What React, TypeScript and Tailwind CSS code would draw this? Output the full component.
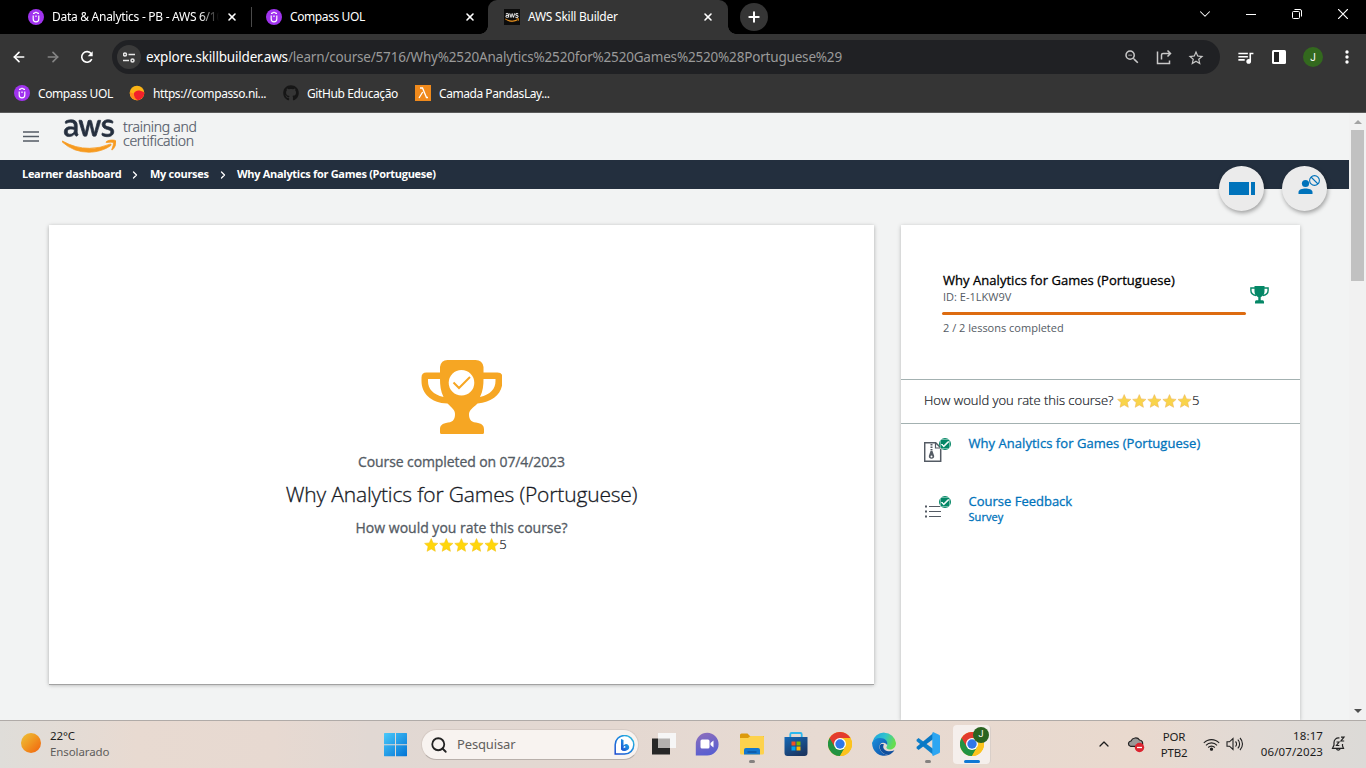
import React from "react";
import { MdQueueMusic, MdStarBorder, MdZoomOut, MdCheck } from "react-icons/md";
import { FaAws, FaGithub } from "react-icons/fa";
import { ArrowLeft, ArrowRight, X, Plus, ChevronUp, ChevronDown, ChevronRight, Search } from "lucide-react";

function Udot() {
  return (
    <svg className="h-4 w-4 shrink-0" viewBox="0 0 16 16">
      <circle cx="8" cy="8" r="8" fill="#a033ee" />
      <path d="M5.200 6.500v3.500a2.800 2.800 0 0 0 5.600 0V6.500M5 4.300h1.500M9.500 4.300H11M6.500 4.300a1.600 1.600 0 0 1 3 0M8 6.500v1.500" fill="none" stroke="#fff" strokeWidth="1.200" />
    </svg>
  );
}

function AwsLogo({ className, letters, id }: { className: string; letters: string; id: string }) {
  return (
    <>
      <svg width="0" height="0" className="absolute">
        <linearGradient id={id} x1="0" y1="0" x2="0" y2="1">
          <stop offset="0.58" stopColor={letters} />
          <stop offset="0.58" stopColor="#f79a1f" />
        </linearGradient>
      </svg>
      <FaAws className={className} fill={`url(#${id})`} stroke={`url(#${id})`} strokeWidth={9} />
    </>
  );
}

function Stars({ color, edge }: { color: string; edge: string }) {
  return (
    <svg className="h-[14px] w-[75px] shrink-0" viewBox="0 0 75 14">
      {[0, 1, 2, 3, 4].map((i) => (
        <path
          key={i}
          transform={`translate(${i * 15.1} 0)`}
          d="M7.200 .6l1.900 4.300 4.700.5-3.500 3.200 1 4.700-4.100-2.400-4.100 2.400 1-4.700L.6 5.400l4.700-.5z"
          fill={color}
          stroke={edge}
          strokeWidth="0.600"
        />
      ))}
    </svg>
  );
}

function Done() {
  return (
    <span className="absolute left-[15px] top-[-3px] flex h-3 w-3 items-center justify-center rounded-full bg-[#048766]">
      <MdCheck className="h-[10px] w-[10px] stroke-white stroke-2 text-white" />
    </span>
  );
}

function Chrome() {
  return (
    <svg className="h-6 w-6" viewBox="0 0 24 24">
      <circle cx="12" cy="12" r="12" fill="#fbbc05" />
      <path d="M1.600 6a12 12 0 0 0 10.400 18l5.200-9L12 12z" fill="#229342" />
      <path d="M12 6h10.400A12 12 0 0 1 12 24l5.200-9z" fill="#fcc31e" />
      <path d="M1.600 6L6.800 15 12 6h10.400A12 12 0 0 0 1.600 6z" fill="#e33b2e" />
      <circle cx="12" cy="12" r="6" fill="#fff" />
      <circle cx="12" cy="12" r="4.700" fill="#2f77e8" />
    </svg>
  );
}

function Edge() {
  return (
    <svg className="h-6 w-6" viewBox="0 0 24 24">
      <defs>
        <linearGradient id="ea" x1="0" y1="0" x2="1" y2="0.300">
          <stop offset="0" stopColor="#1f9fdf" />
          <stop offset="0.550" stopColor="#2fc3cf" />
          <stop offset="1" stopColor="#66dd4f" />
        </linearGradient>
        <linearGradient id="eb" x1="0" y1="0" x2="1" y2="1">
          <stop offset="0" stopColor="#1b8fdc" />
          <stop offset="1" stopColor="#0c4da6" />
        </linearGradient>
      </defs>
      <path d="M.3 10.500A12 12 0 0 1 24 11c0 4.200-3 6.500-6 6.500-3 0-4.200-1.400-3.400-2.700 1.800-2.800.2-6.600-4.600-6.600-4 0-7.500 1.300-9.700 4.300z" fill="url(#ea)" />
      <path d="M.2 11C1.500 7.400 5 5.800 8.500 6c5 .2 7.700 3.500 6.600 7.300-.5-1.700-2-2.600-3.900-2.600-3 0-4.300 2.700-3.600 5.600.9 3.700 4.500 6.500 8.900 6.700A12 12 0 0 1 .2 11z" fill="url(#eb)" />
      <path d="M7.700 13.500c-.6 4 2.300 8.600 8.800 9.500 2.500-.9 4.700-2.700 5.900-4.800-2.900 1.500-7.500 1.400-9.500-.2-1.700-1.400-2.300-3.300-1-5.700-2-.8-3.700-.2-4.200 1.200z" fill="#0f4f9e" />
    </svg>
  );
}

function VsCode() {
  return (
    <svg className="h-6 w-6" viewBox="0 0 24 24">
      <path d="M.5 7.800l2-1.800L18 17.500v6L.7 9.200z" fill="#0f7fc9" />
      <path d="M.5 16.200l2 1.800L18 6.500v-6L.7 14.800z" fill="#0a78c4" />
      <path d="M17.500.2L23 2.800a1.500 1.500 0 0 1 1 1.400v15.600a1.500 1.500 0 0 1-1 1.400l-5.500 2.600c-.7.200-1.200-.2-1.200-.9V1.100c0-.7.6-1.100 1.200-.9z" fill="#2da6f2" />
    </svg>
  );
}

function Folder() {
  return (
    <svg className="h-6 w-6" viewBox="0 0 24 24">
      <path d="M0 3a1.500 1.500 0 0 1 1.500-1.500h6L10 4H24v3H0z" fill="#dc9a0c" />
      <path d="M0 6h8l2.500-2H23a1 1 0 0 1 1 1V21a1.500 1.500 0 0 1-1.500 1.500h-21A1.500 1.500 0 0 1 0 21z" fill="#fdd24d" />
      <path d="M4 22.500V18a2 2 0 0 1 2-2h12a2 2 0 0 1 2 2v4.500z" fill="#1377ce" />
      <path d="M7.500 20h9" stroke="#0c55a0" strokeWidth="1.500" />
    </svg>
  );
}

function Store() {
  return (
    <svg className="h-6 w-6" viewBox="0 0 24 24">
      <defs>
        <linearGradient id="st" x1="0" y1="0" x2="0.600" y2="1">
          <stop offset="0" stopColor="#1469b8" />
          <stop offset="1" stopColor="#1b3763" />
        </linearGradient>
      </defs>
      <path d="M6.300 6V2.300a1.300 1.300 0 0 1 1.300-1.300h8.800a1.300 1.300 0 0 1 1.300 1.300V6" fill="none" stroke="#2db8ee" strokeWidth="1.800" />
      <path d="M.5 5h23v16a3 3 0 0 1-3 3h-17a3 3 0 0 1-3-3z" fill="url(#st)" />
      <path d="M7.500 9.500h4v4h-4z" fill="#f25022" />
      <path d="M12.500 9.500h4v4h-4z" fill="#7fba00" />
      <path d="M7.500 14.500h4v4h-4z" fill="#00a4ef" />
      <path d="M12.500 14.500h4v4h-4z" fill="#ffb900" />
    </svg>
  );
}

function TabStrip() {
  return (
    <div className="relative flex h-[34px] items-center bg-black text-[12px] text-white">
      <div className="flex w-[251px] items-center pl-7">
        <Udot />
        <span className="ml-2 w-[168px] overflow-hidden whitespace-nowrap tracking-[-0.280px] [mask-image:linear-gradient(to_right,#000_148px,transparent_167px)]">Data &amp; Analytics - PB - AWS 6/10</span>
        <X className="ml-[6px] h-3 w-3" strokeWidth={3.200} />
      </div>
      <div className="h-5 w-px bg-[#4a4a4a]" />
      <div className="flex w-[236px] items-center pl-[14px]">
        <Udot />
        <span className="ml-2 w-[172px] tracking-[-0.400px]">Compass UOL</span>
        <X className="ml-[2px] h-3 w-3" strokeWidth={3.200} />
      </div>
      <div className="relative flex h-[34px] w-[240px] items-center rounded-t-[9px] bg-[#353535] pl-4">
        <span className="absolute -left-2 bottom-0 h-2 w-2 bg-[radial-gradient(circle_at_0_0,#000_7.500px,#353535_8px)]" />
        <span className="absolute -right-2 bottom-0 h-2 w-2 bg-[radial-gradient(circle_at_100%_0,#000_7.500px,#353535_8px)]" />
        <span className="flex h-4 w-4 items-center justify-center bg-[#0c0c0c]">
          <AwsLogo id="aws-tab" className="h-[13px] w-[14px]" letters="#ffffff" />
        </span>
        <span className="ml-2 w-[174px] tracking-[-0.250px]">AWS Skill Builder</span>
        <X className="h-3 w-3" strokeWidth={3.200} />
      </div>
      <div className="ml-3 mt-[-1px] flex h-7 w-7 items-center justify-center rounded-full bg-[#353535]">
        <Plus className="h-4 w-4" strokeWidth={3} />
      </div>
      <div className="ml-auto mt-[-6px] flex items-center">
        <ChevronDown className="mr-[32px] h-[18px] w-[18px]" strokeWidth={1.400} />
        <svg className="mr-[36px] h-[10px] w-[10px]" viewBox="0 0 10 10"><path d="M0 5.500h10" stroke="#fff" /></svg>
        <svg className="mr-[36px] h-[10px] w-[10px]" viewBox="0 0 10 10">
          <rect x=".5" y="2.500" width="7" height="7" rx="1" fill="none" stroke="#fff" />
          <path d="M2.500.5H8A1.500 1.500 0 0 1 9.500 2v5.500" fill="none" stroke="#fff" />
        </svg>
        <svg className="mr-[18px] h-[10px] w-[10px]" viewBox="0 0 10 10"><path d="M0 0l10 10M10 0L0 10" stroke="#fff" strokeWidth="1.200" /></svg>
      </div>
    </div>
  );
}

function Toolbar() {
  return (
    <div className="flex h-[40px] items-end bg-[#353535]">
      <div className="flex h-[34px] w-[112px] items-center pl-[11px]">
        <ArrowLeft className="h-4 w-4 text-white" strokeWidth={2.500} />
        <ArrowRight className="ml-[18px] h-4 w-4 text-[#858585]" strokeWidth={2.500} />
        <svg className="ml-[19px] h-[14px] w-[14px]" viewBox="0 0 14 14">
          <path d="M11.800 9.200A5.300 5.300 0 1 1 11.300 3.800" fill="none" stroke="#fff" strokeWidth="1.600" />
          <path d="M12.700 1.200v5H7.700z" fill="#fff" />
        </svg>
      </div>
      <div className="flex h-[34px] w-[1108px] items-center rounded-full bg-[#202124] pl-[5px]">
        <span className="flex h-6 w-6 items-center justify-center rounded-full bg-[#3a3a3a]">
          <svg className="h-[11px] w-3" viewBox="0 0 12 11" fill="none" stroke="#e8e8e8" strokeWidth="1.500">
            <circle cx="2" cy="2.500" r="1.500" />
            <path d="M5.500 2.500H12M0 8.500h6" />
            <circle cx="9.500" cy="8.500" r="1.500" />
          </svg>
        </span>
        <span className="ml-[5px] mt-px whitespace-nowrap text-[13.500px] tracking-[-0.185px] text-[#9a9a9a]"><span className="text-white">explore.skillbuilder.aws</span>/learn/course/5716/Why%2520Analytics%2520for%2520Games%2520%28Portuguese%29</span>
        <div className="ml-auto mr-[15px] flex items-center gap-[14px] text-[#c8c8c8]">
          <MdZoomOut className="h-[18px] w-[18px]" />
          <svg className="h-[18px] w-[18px]" viewBox="0 0 18 18" fill="none" stroke="currentColor" strokeWidth="1.500">
            <path d="M2.500 3.500v12h12v-3M6.500 11.500V7a1.500 1.500 0 0 1 1.500-1.500h7M12.500 2.500l3 3-3 3" />
          </svg>
          <MdStarBorder className="mt-px h-[18px] w-[18px]" />
        </div>
      </div>
      <div className="flex h-[34px] flex-1 items-center pl-[16px] text-white">
        <MdQueueMusic className="h-[19px] w-[19px]" />
        <svg className="ml-[17px] h-[14px] w-[14px]" viewBox="0 0 14 14"><rect width="14" height="14" rx="1.500" fill="#fff" /><rect x="2" y="2" width="5" height="10" fill="#222" /></svg>
        <span className="ml-[17px] flex h-5 w-5 items-center justify-center rounded-full bg-[#33691e] font-[Roboto,sans-serif] text-[10px]">J</span>
        <svg className="ml-[22px] h-[14px] w-1" viewBox="0 0 4 14" fill="#fff"><circle cx="2" cy="2" r="1.700" /><circle cx="2" cy="7" r="1.700" /><circle cx="2" cy="12" r="1.700" /></svg>
      </div>
    </div>
  );
}

function Bookmarks() {
  return (
    <div className="flex h-[39px] items-center border-b border-[#5a5a5a] bg-[#353535] pl-[14px] text-[12px] tracking-[-0.400px] text-white">
      <Udot />
      <span className="ml-2 mt-px w-[75px] whitespace-nowrap">Compass UOL</span>
      <svg className="ml-4 h-4 w-4" viewBox="0 0 16 16">
        <circle cx="8" cy="8" r="7.300" fill="#fbb416" />
        <path d="M1 6.500A7.300 7.300 0 0 0 10 15C6 14 4.500 11 5 8c-1 .5-3 .2-4-1.500z" fill="#ff8a1c" />
        <path d="M5 8c2-3 5-3.500 10.300-.5A7.300 7.300 0 0 1 9 15.200C6 14 4.500 11 5 8z" fill="#f2202b" />
      </svg>
      <span className="ml-2 mt-px w-[114px] whitespace-nowrap">https://compasso.ni...</span>
      <FaGithub className="ml-4 h-4 w-4 text-[#161616]" />
      <span className="ml-2 mt-px w-[92px] whitespace-nowrap tracking-[-0.380px]">GitHub Educação</span>
      <svg className="ml-4 h-4 w-4" viewBox="0 0 16 16">
        <rect width="16" height="16" fill="#f08a1c" />
        <path d="M5 3h2.500l4 9.500H13M7.700 7L4 13" fill="none" stroke="#fff" strokeWidth="1.300" />
      </svg>
      <span className="ml-2 mt-px whitespace-nowrap tracking-[-0.450px]">Camada PandasLay...</span>
    </div>
  );
}

function CourseCard() {
  return (
    <section className="flex h-[459px] w-[825px] shrink-0 flex-col items-center bg-white pt-[135px] text-[#545b64] shadow-[0_1px_0_#a2a2a2,0_1px_4px_rgba(0,0,0,0.3)]">
      <svg className="h-[75px] w-[81px]" viewBox="0.500 0 81 75">
        <path d="M27 0h28q7 0 8 7v5.500h14q5 0 5 5V21c0 12-9 21-25 22.500-5 5-8 6-8.500 10.500 0 4 1 8 7 8.500 6 1 8 3 8 7v3q0 1.500-1.500 1.500h-41Q19.500 74 19.500 72.500v-3c0-4 2-6 8-7 6-.5 7-4.500 7-8.500 0-4-3-6-7.500-10.500C10 43 1 33 1 21v-3.500q0-5 5-5h13.500V7q1-7 7.500-7zM19.500 19h-12v2c0 8 5 13.500 15.500 16-3-6-3.500-12-3.500-18zM63 19c0 6-.5 12-3.500 18C70 34.500 75 29 75 21v-2z" fill="#f6a623" fillRule="evenodd" />
        <circle cx="41" cy="22.700" r="12.800" fill="#fff" />
        <path d="M33 22.500l5.500 5.500L49.500 17" fill="none" stroke="#f6a623" strokeWidth="2" />
      </svg>
      <div className="mt-4 text-[14px] leading-[22px] tracking-[-0.100px] [-webkit-text-stroke:0.300px]">Course completed on 07/4/2023</div>
      <h1 className="mt-[5px] text-[21px] font-light leading-[32px] tracking-[-0.160px] text-[#16191f] [-webkit-text-stroke:0.300px]">Why Analytics for Games (Portuguese)</h1>
      <div className="mt-[8px] text-[14px] leading-[20px] tracking-[0px] [-webkit-text-stroke:0.300px]">How would you rate this course?</div>
      <div className="ml-[8px] mt-[-1px] flex h-[15px] items-center text-[13px] text-[#16191f]">
        <Stars color="#ffd60a" edge="#f5c518" /><span className="font-light [-webkit-text-stroke:0.200px]">5</span>
      </div>
    </section>
  );
}

function SidePanel() {
  return (
    <aside className="h-[495px] w-[399px] shrink-0 bg-white shadow-[0_1px_4px_rgba(0,0,0,0.25)]">
      <div className="flex h-[155px] border-b border-[#a3b1b1] pl-[41px] pt-[46px]">
        <div className="w-[304px] text-[11px] text-[#545b64]">
          <div className="ml-px whitespace-nowrap text-[13px] leading-[18px] tracking-[0.040px] text-black [-webkit-text-stroke:0.300px]">Why Analytics for Games (Portuguese)</div>
          <div className="ml-px leading-[16px]">ID: E-1LKW9V</div>
          <div className="mt-[7px] h-[3px] rounded-full bg-[#dd6b10]" />
          <div className="ml-px mt-[5px] leading-[16px]">2 / 2 lessons completed</div>
        </div>
        <svg className="ml-1 mt-[15px] h-[18px] w-[19px]" viewBox="0 0 19 18">
          <path d="M5 2H.9v2.500C.9 7 3 9 6 9.500M14 2h4.100v2.500C18.100 7 16 9 13 9.500" fill="none" stroke="#048766" strokeWidth="1.400" />
          <path d="M4.500 0h10v5c0 4-2 5-3.800 6.200v3h2q1.300 0 1.300 1.800v1.500H5V16q0-1.800 1.300-1.800h2v-3C6.500 10 4.500 9 4.500 5z" fill="#048766" />
        </svg>
      </div>
      <div className="flex h-[44px] items-center border-b border-[#a3b1b1] pb-[2px] pl-[23px] text-[13px] text-[#16191f]">
        <span className="mr-[3px] w-[190px] whitespace-nowrap font-light [-webkit-text-stroke:0.200px]">How would you rate this course?</span>
        <Stars color="#f9d44a" edge="#eeb960" /><span className="font-light [-webkit-text-stroke:0.200px]">5</span>
      </div>
      <div className="flex h-[58px] pl-[23px] pt-[17px]">
        <div className="relative h-6 w-[45px]">
          <svg className="h-[21px] w-[18px]" viewBox="0 0 18 21" fill="none" stroke="#545b64">
            <path d="M.7 1.700h11l5 5v13.600H.7z" strokeWidth="1.500" />
            <path d="M11.500 2v5h5" strokeWidth="1.200" />
            <path d="M7.500 3v7" strokeDasharray="1.500 1" strokeWidth="2" />
            <path d="M6.500 10h2l1.700 5a2.700 2.700 0 0 1-5.400 0z" fill="#545b64" stroke="none" />
            <circle cx="7.500" cy="15.500" r="1" fill="#fff" stroke="none" />
          </svg>
          <Done />
        </div>
        <div className="ml-[-0.500px] mt-[-8px] text-[13px] leading-[20px] tracking-[0.040px] text-[#0073bb] [-webkit-text-stroke:0.300px]">Why Analytics for Games (Portuguese)</div>
      </div>
      <div className="flex h-[58px] pl-[23px] pt-[17px]">
        <div className="relative h-6 w-[45px]">
          <svg className="mt-[5px] h-[14px] w-[18px]" viewBox="0 0 18 14">
            <path d="M5 2.500h12M5 7.500h12M5 12.500h12" stroke="#545b64" />
            <path d="M1 2.500h2M1 7.500h2M1 12.500h2" stroke="#545b64" strokeWidth="2" />
          </svg>
          <Done />
        </div>
        <div className="ml-[-0.500px] mt-[-8px] text-[13px] leading-[20px] text-[#0073bb] [-webkit-text-stroke:0.300px]">
          Course Feedback
          <div className="mt-[-2px] text-[11px] leading-[16px] tracking-[0.080px]">Survey</div>
        </div>
      </div>
    </aside>
  );
}

function Page() {
  return (
    <div className="flex h-[607px] font-['Open_Sans','Liberation_Sans',sans-serif]">
      <main className="relative h-full w-[1349px] overflow-hidden bg-[#f2f3f3]">
        <header className="flex h-[47px] items-center pl-[23px]">
          <svg className="mt-[-1px] h-[11px] w-4" viewBox="0 0 16 11"><path d="M0 1h16M0 5.500h16M0 10h16" stroke="#545b64" strokeWidth="1.300" /></svg>
          <AwsLogo id="aws-head" className="ml-[23px] mt-[-2px] h-[44px] w-[54px]" letters="#252f3e" />
          <div className="ml-[7px] mt-[-6px] whitespace-nowrap font-['Noto_Sans','Open_Sans',sans-serif] text-[14px] font-light leading-[14px] tracking-[-0.270px] text-[#545b69] [-webkit-text-stroke:0.200px]"><div>training and</div><div>certification</div></div>
        </header>
        <nav className="flex h-[29px] items-center bg-[#232f3e] pl-[22px] text-[11px] font-bold tracking-[-0.300px] text-white">
          <span className="w-[99px] whitespace-nowrap">Learner dashboard</span>
          <ChevronRight className="ml-[8px] mr-[9px] h-3 w-3" strokeWidth={2.600} />
          <span className="w-[59px] whitespace-nowrap">My courses</span>
          <ChevronRight className="mx-[8px] h-3 w-3" strokeWidth={2.600} />
          <span className="whitespace-nowrap">Why Analytics for Games (Portuguese)</span>
        </nav>
        <div className="flex gap-[27px] pl-[49px] pt-[36px]">
          <CourseCard />
          <SidePanel />
        </div>
        <div className="absolute left-[1219px] top-[53px] flex gap-[18px]">
          <button className="flex h-[45px] w-[45px] items-center justify-center rounded-full bg-[#ebebeb] shadow-[1px_2px_4px_rgba(0,0,0,0.35)]">
            <svg className="h-[13px] w-[26px]" viewBox="0 0 26 13" fill="#0073bb"><path d="M0 0h20v13H0zM22 0h4v13h-4z" /></svg>
          </button>
          <button className="flex h-[45px] w-[45px] items-center justify-center rounded-full bg-[#ebebeb] shadow-[1px_2px_4px_rgba(0,0,0,0.35)]">
            <svg className="mb-[7px] ml-[8px] h-[20px] w-[22px]" viewBox="0 0 22 20">
              <circle cx="7.500" cy="8.500" r="3.600" fill="#0073bb" />
              <path d="M.5 19v-2c0-2.500 4-3.500 7-3.500s7 1 7 3.500v2z" fill="#0073bb" />
              <circle cx="16.500" cy="5.500" r="4.900" fill="none" stroke="#0073bb" strokeWidth="1.100" />
              <path d="M13 2l7 7" stroke="#0073bb" strokeWidth="1.100" />
            </svg>
          </button>
        </div>
      </main>
      <div className="flex w-[17px] flex-col items-center bg-[#f1f1f1]">
        <svg className="mt-[7px] h-[4px] w-[8px]" viewBox="0 0 8 4"><path d="M0 4l4-4 4 4z" fill="#a3a3a3" /></svg>
        <div className="mt-[6px] h-[151px] w-[13px] bg-[#c1c1c1]" />
        <svg className="mb-[7px] mt-auto h-[4px] w-[8px]" viewBox="0 0 8 4"><path d="M0 0l4 4 4-4z" fill="#505050" /></svg>
      </div>
    </div>
  );
}

function Slot({ children, mark }: { children: React.ReactNode; mark?: boolean }) {
  return (
    <div className="flex h-full w-[44px] flex-col items-center pt-[11px]">
      <div className="flex h-6 items-center">{children}</div>
      {mark && <div className="mt-[4px] h-[3px] w-[6px] rounded-full bg-[#858280]" />}
    </div>
  );
}

function Taskbar() {
  return (
    <div className="flex h-[48px] border-t border-[#b0aba8] bg-[linear-gradient(90deg,#dfddd9_0%,#e8dad1_10%,#e7d9d1_20%,#e1d8d3_27%,#e4d8d1_45%,#e7dad2_60%,#e9d9ce_83%,#e1dad5_92%,#dcdad7_100%)] font-['Noto_Sans','Open_Sans',sans-serif] text-[#1c1c1c]">
      <div className="flex w-[383px] pl-[21px]">
        <div className="mt-[12px] h-5 w-5 rounded-full bg-[linear-gradient(135deg,#edc33a,#f09a22_45%,#f2600c)]" />
        <div className="ml-[9px] mt-[7px] text-[11.500px] leading-[16px] tracking-[-0.100px]">22°C<div className="text-[#605d5b]">Ensolarado</div></div>
      </div>
      <svg className="mt-[12px] h-6 w-6" viewBox="0 0 24 24">
        <defs>
          <linearGradient id="win" gradientUnits="userSpaceOnUse" x1="0" y1="0" x2="24" y2="24">
            <stop offset="0" stopColor="#4ccbfb" />
            <stop offset="1" stopColor="#0072d4" />
          </linearGradient>
        </defs>
        <path d="M1.500 0H12v11.300H1V.5zM13 0h10.500l.5.500v10.800H13zM1 12.300h11v11H1.500L1 23zM13 12.300h11V23l-.5.300H13z" fill="url(#win)" />
      </svg>
      <div className="ml-[14px] mt-[8px] flex h-[31px] w-[218px] items-center rounded-full border border-b-[#b9b0ab] border-l-[#d6cbc5] border-r-[#d6cbc5] border-t-[#d6cbc5] bg-[#f8f3f0] pl-[8px] pr-[3px]">
        <Search className="h-[18px] w-[18px] text-[#222]" strokeWidth={2.400} />
        <span className="ml-[9px] text-[13px] tracking-[-0.150px] text-[#625f5d]">Pesquisar</span>
        <svg className="ml-auto h-5 w-[21px]" viewBox="0 0 21 20">
          <defs>
            <linearGradient id="bi" x1="0" y1="1" x2="1" y2="0"><stop offset="0" stopColor="#1b4ad0" /><stop offset="0.600" stopColor="#1d8ee0" /><stop offset="1" stopColor="#35c4dc" /></linearGradient>
          </defs>
          <path d="M1.200 19V10A9.300 9.300 0 1 1 10.500 19.100z" fill="#fff" stroke="url(#bi)" strokeWidth="1.500" />
          <path d="M7 4l2.500 1v5.500Q13 7.500 15 11q1 3-2.500 4.500Q9 17 7 14.500zM9.500 13.300l2.500-1.200-2-1.300z" fill="url(#bi)" />
        </svg>
      </div>
      <div className="ml-[3px] flex">
        <Slot>
          <svg className="h-6 w-6" viewBox="0 0 24 24">
            <rect x="0" y="6.500" width="18" height="16" fill="#272727" />
            <rect x="6" y="1" width="18" height="15" fill="#f6f6f6" />
            <rect x="6" y="6.500" width="12" height="9.500" fill="#b4b1af" />
          </svg>
        </Slot>
        <Slot>
          <svg className="mr-[2px] h-6 w-6" viewBox="0 0 24 24">
            <defs>
              <linearGradient id="ch" x1="0" y1="0" x2="0.300" y2="1">
                <stop offset="0" stopColor="#8f6fbb" />
                <stop offset="1" stopColor="#5a5fd0" />
              </linearGradient>
            </defs>
            <path d="M.8 23.500V12A11.400 11.400 0 1 1 12 23.500z" fill="url(#ch)" />
            <rect x="5.500" y="7.500" width="9" height="9" rx="1.500" fill="#fff" />
            <path d="M15.500 11l3-2.500v7l-3-2.500z" fill="#fff" />
          </svg>
        </Slot>
        <Slot mark><Folder /></Slot>
        <Slot><Store /></Slot>
        <Slot><Chrome /></Slot>
        <Slot><Edge /></Slot>
        <Slot mark><VsCode /></Slot>
        <div className="relative ml-[3px] mt-[4px] flex h-[39px] w-[38px] flex-col items-center rounded-[4px] border-r border-[#d9cfc9] bg-[#f5efec] pl-px pt-[7px]">
          <Chrome />
          <div className="mt-[4px] h-[3px] w-4 shrink-0 rounded-full bg-[#0f78d4]" />
          <span className="absolute left-[20px] top-[2px] flex h-4 w-4 items-center justify-center rounded-full bg-[#2b6420] font-[Roboto,sans-serif] text-[9px] text-white">J</span>
        </div>
      </div>
      <div className="ml-auto flex text-[11.500px] leading-[16px] tracking-[0.100px]">
        <ChevronUp className="mt-[15px] h-4 w-4" strokeWidth={1.900} />
        <svg className="ml-[15px] mt-[15px] h-[17px] w-[18px]" viewBox="0 0 18 17">
          <path d="M3.500 10.300C1 9.500.5 6 4 5 5.500 1.500 10.500.8 12.500 4c3 .3 4 3 2.500 6.300z" fill="#9b9998" stroke="#222" strokeWidth="1.200" />
          <circle cx="12.500" cy="11.500" r="4.700" fill="#dc2430" />
          <path d="M10 11.500h5" stroke="#fff" strokeWidth="1.300" />
        </svg>
        <div className="ml-[14px] mt-[8px] w-[30px] text-center tracking-[-0.200px]">POR<div>PTB2</div></div>
        <svg className="ml-[14px] mt-[17px] h-[13px] w-[17px]" viewBox="0 0 17 13" fill="none" stroke="#222" strokeWidth="1.100">
          <path d="M.8 5a10.500 10.500 0 0 1 15.400 0M3 7.300a7.500 7.500 0 0 1 11 0M5.200 9.500a4.600 4.600 0 0 1 6.600 0" />
          <circle cx="8.500" cy="11.200" r="1.100" fill="#222" />
        </svg>
        <svg className="ml-[6px] mt-[16px] h-[14px] w-[18px]" viewBox="0 0 18 14" fill="none" stroke="#222" strokeWidth="1.100">
          <path d="M1 4.800h2.500L7 1.500v11L3.500 9.200H1zM9.500 4.500a3.500 3.500 0 0 1 0 5" />
          <path d="M11.800 2.700a6 6 0 0 1 0 8.600M14 1a8.500 8.500 0 0 1 0 12" />
        </svg>
        <div className="ml-[13px] mt-[7px] w-[66px] text-right">18:17<div>06/07/2023</div></div>
        <svg className="ml-[8px] mr-[20px] mt-[15px] h-[16px] w-[15px]" viewBox="0 0 15 16" fill="none" stroke="#222" strokeWidth="1.200">
          <path d="M8.500 2C5 1.500 3 4 3 6.500V9l-1.500 3.300h11L11.500 10V8M5.500 13a2 2 0 0 0 3.600 0" />
          <path d="M5.500 6H8L5.500 9.500H8.300M10 1.200h3L10 5h3.200" />
        </svg>
      </div>
    </div>
  );
}

export default function App() {
  return (
    <div className="h-[768px] w-[1366px] overflow-hidden font-['Noto_Sans','Open_Sans',sans-serif]">
      <TabStrip />
      <Toolbar />
      <Bookmarks />
      <Page />
      <Taskbar />
    </div>
  );
}
